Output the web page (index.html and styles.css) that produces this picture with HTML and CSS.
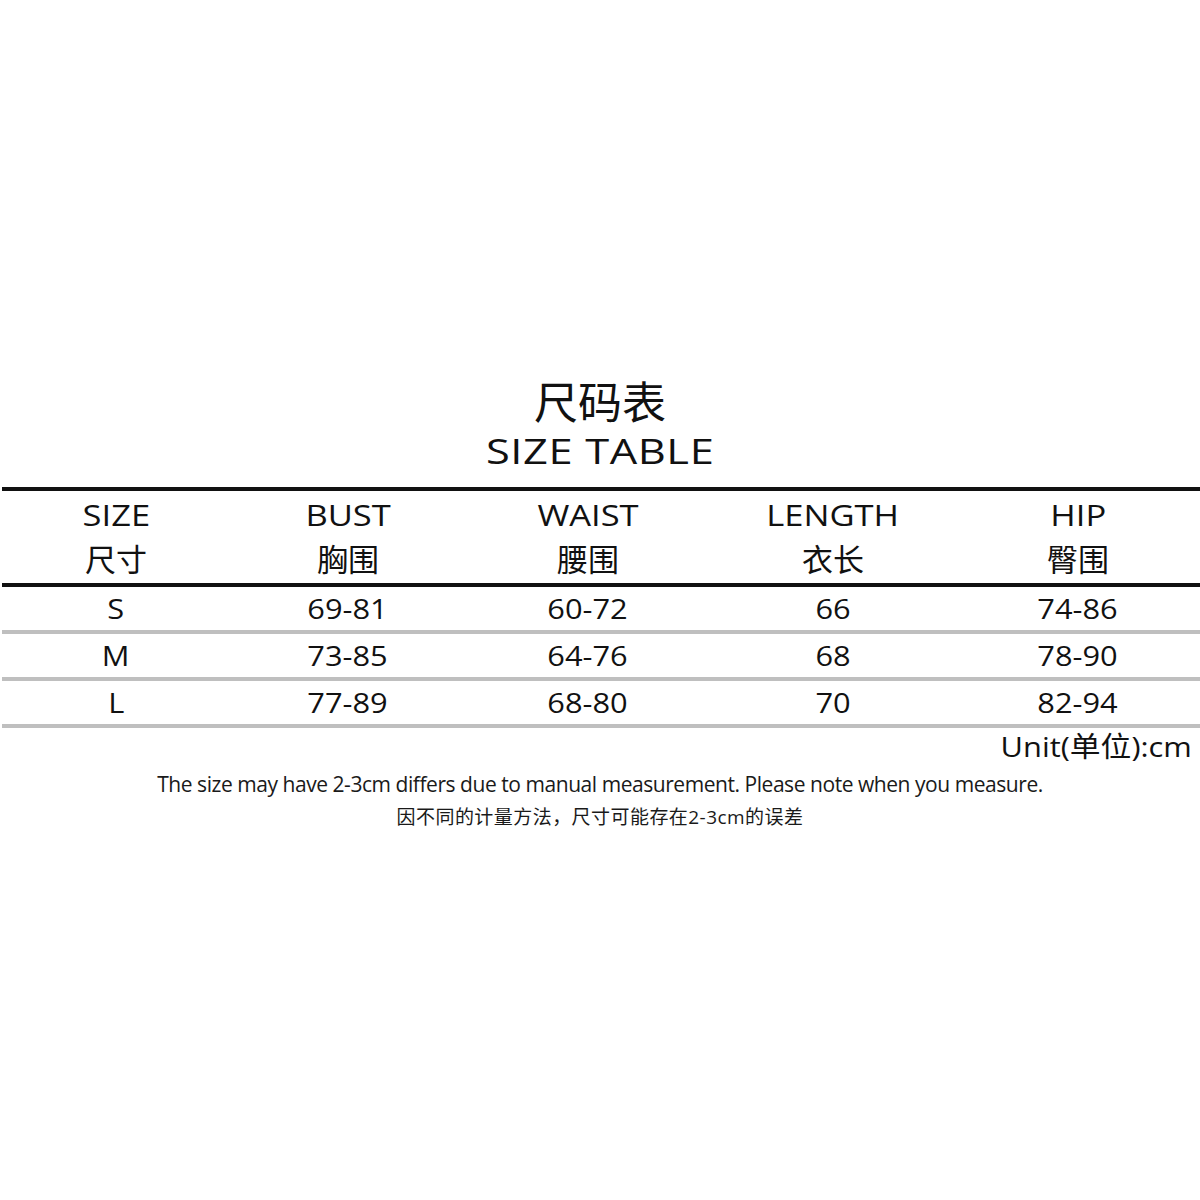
FILE: index.html
```html
<!DOCTYPE html>
<html lang="zh-CN">
<head>
<meta charset="utf-8">
<title>尺码表 SIZE TABLE</title>
<link rel="stylesheet" href="styles.css">
</head>
<body>
<main class="page">
  <h1 class="title-cn">尺码表</h1>
  <h2 class="title-en"><span class="wide-title">SIZE TABLE</span></h2>

  <section class="size-table">
    <div class="row head">
      <div class="cell"><span class="en">SIZE</span><span class="cn">尺寸</span></div>
      <div class="cell"><span class="en">BUST</span><span class="cn">胸围</span></div>
      <div class="cell"><span class="en">WAIST</span><span class="cn">腰围</span></div>
      <div class="cell"><span class="en">LENGTH</span><span class="cn">衣长</span></div>
      <div class="cell"><span class="en">HIP</span><span class="cn">臀围</span></div>
    </div>
    <div class="row data">
      <div class="cell"><span class="num">S</span></div>
      <div class="cell"><span class="num">69-81</span></div>
      <div class="cell"><span class="num">60-72</span></div>
      <div class="cell"><span class="num">66</span></div>
      <div class="cell"><span class="num">74-86</span></div>
    </div>
    <div class="row data">
      <div class="cell"><span class="num">M</span></div>
      <div class="cell"><span class="num">73-85</span></div>
      <div class="cell"><span class="num">64-76</span></div>
      <div class="cell"><span class="num">68</span></div>
      <div class="cell"><span class="num">78-90</span></div>
    </div>
    <div class="row data">
      <div class="cell"><span class="num">L</span></div>
      <div class="cell"><span class="num">77-89</span></div>
      <div class="cell"><span class="num">68-80</span></div>
      <div class="cell"><span class="num">70</span></div>
      <div class="cell"><span class="num">82-94</span></div>
    </div>
  </section>

  <p class="unit"><span class="unit-text">Unit(单位):cm</span></p>
  <p class="note-en">The size may have 2-3cm differs due to manual measurement. Please note when you measure.</p>
  <p class="note-cn">因不同的计量方法，尺寸可能存在2-3cm的误差</p>
</main>
</body>
</html>
```

FILE: styles.css
```css
* {
  box-sizing: border-box;
}

html, body {
  margin: 0;
  padding: 0;
  background: #ffffff;
}

body {
  font-family: "Open Sans", "Noto Sans CJK SC", sans-serif;
  color: #111111;
}

.page {
  width: 1200px;
  padding-top: 375px;
}

.title-cn {
  margin: 0;
  height: 50px;
  font-family: "Noto Sans CJK SC", sans-serif;
  font-size: 44px;
  font-weight: 400;
  line-height: 50px;
  text-align: center;
}

.title-en {
  margin: 4px 0 14px;
  height: 44px;
  font-size: 35px;
  font-weight: 400;
  line-height: 44px;
  text-align: center;
}

.wide-title {
  display: inline-block;
  letter-spacing: 0.5px;
  transform: scaleX(1.24);
}

.size-table {
  margin-left: 2px;
  width: 1198px;
  border-top: 4px solid #111111;
}

.row {
  display: grid;
  grid-template-columns: 228px 236px 244px 246px 244px;
}

.row.head {
  border-bottom: 4px solid #111111;
  padding: 4px 0;
}

.row.data {
  border-bottom: 4px solid #bfbfbf;
}

.cell {
  display: flex;
  flex-direction: column;
  align-items: center;
}

.en {
  display: block;
  font-size: 30px;
  line-height: 40px;
  height: 40px;
  transform: scaleX(1.15);
}

.cn {
  display: block;
  margin-top: 4px;
  font-size: 31px;
  line-height: 40px;
  height: 40px;
}

.num {
  display: block;
  font-size: 28px;
  line-height: 43px;
  height: 43px;
  transform: scaleX(1.1);
}

.unit {
  margin: 0;
  height: 36px;
  padding-right: 8px;
  font-size: 28px;
  line-height: 36px;
  text-align: right;
}

.unit-text {
  display: inline-block;
  transform: scaleX(1.1);
  transform-origin: right center;
}

.note-en {
  margin: 5px 0 0;
  height: 30px;
  font-size: 21px;
  line-height: 30px;
  letter-spacing: -0.45px;
  text-align: center;
  color: #1a1a1a;
}

.note-cn {
  margin: 4px 0 0;
  height: 28px;
  font-size: 19px;
  line-height: 28px;
  letter-spacing: 0.45px;
  text-align: center;
  color: #1a1a1a;
}
```
